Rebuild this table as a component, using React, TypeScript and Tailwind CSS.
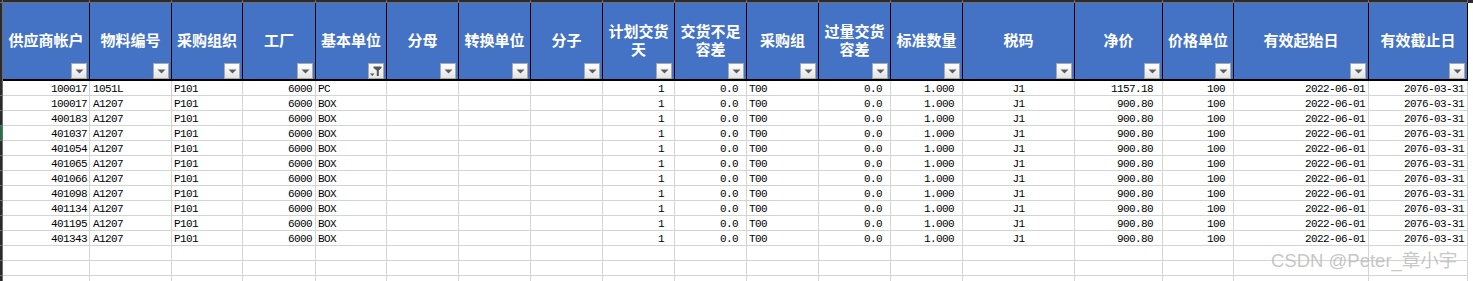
import React from 'react';

const GRID =
  'grid grid-cols-[3px_87px_82px_71px_73px_71px_72px_72px_72px_72px_72px_72px_72px_72px_112px_88px_71px_135px_99px]';

const headers = [
  '供应商帐户', '物料编号', '采购组织', '工厂', '基本单位', '分母', '转换单位', '分子',
  '计划交货天', '交货不足容差', '采购组', '过量交货容差', '标准数量', '税码', '净价',
  '价格单位', '有效起始日', '有效截止日',
];

// alignment + padding for each data column
const cellCls = [
  'justify-end pr-[2px]',
  'justify-start pl-[3px]',
  'justify-start pl-[2px]',
  'justify-end pr-[3px]',
  'justify-start pl-[2px]',
  'justify-end',
  'justify-end',
  'justify-end',
  'justify-end pr-[10px]',
  'justify-end pr-[8px]',
  'justify-start pl-[2px]',
  'justify-end pr-[8px]',
  'justify-end pr-[8px]',
  'justify-center',
  'justify-end pr-[9px]',
  'justify-end pr-[8px]',
  'justify-end pr-[3px]',
  'justify-end pr-[3px]',
];

const accounts = ['100017', '100017', '400183', '401037', '401054', '401065', '401066', '401098', '401134', '401195', '401343'];

const rows = accounts.map((acct, i) => [
  acct,
  i === 0 ? '1051L' : 'A1207',
  'P101',
  '6000',
  i === 0 ? 'PC' : 'BOX',
  '',
  '',
  '',
  '1',
  '0.0',
  'T00',
  '0.0',
  '1.000',
  'J1',
  i === 0 ? '1157.18' : '900.80',
  '100',
  '2022-06-01',
  '2076-03-31',
]);

const FilterButton: React.FC<{ active?: boolean }> = ({ active }) => (
  <div className="absolute right-[2px] bottom-0 w-[16px] h-[16px] border border-[#a9a9a9] bg-gradient-to-b from-white to-[#e4e4e4] flex items-center justify-center">
    {active ? (
      <svg width="14" height="14" viewBox="0 0 14 14">
        <polygon points="4.5,2.5 12.5,2.5 12.5,4 9.8,6.5 9.8,12 7.8,12 7.8,6.5 4.5,4" fill="#555" />
        <polygon points="1,9.5 5.5,9.5 3.25,12" fill="#555" />
      </svg>
    ) : (
      <svg width="9" height="5" viewBox="0 0 9 5">
        <polygon points="0.5,0.5 8.5,0.5 4.5,4.5" fill="#5f5f5f" />
      </svg>
    )}
  </div>
);

export default function App() {
  return (
    <div className="relative w-[1473px] h-[281px] overflow-hidden bg-white">
      {/* column letter strip (cut off) */}
      <div className={`${GRID} h-[3px] bg-[#2b2b2b]`}>
        {Array.from({ length: 19 }).map((_, i) => (
          <div key={i} className="border-r border-b border-[#6e6e6e]" />
        ))}
      </div>

      {/* header */}
      <div className={`${GRID} h-[78px]`}>
        <div className="bg-[#2b2b2b] border-r border-[#6e6e6e]" />
        {headers.map((h, i) => (
          <div
            key={h}
            className="relative bg-[#4472c4] border-r border-black border-b-2 flex items-center justify-center px-[4px] pb-[2px]"
          >
            <span className="text-white text-[15px] leading-[18px] font-bold text-center [font-family:'Noto_Sans_CJK_SC',sans-serif]">
              {h}
            </span>
            <FilterButton active={i === 4} />
          </div>
        ))}
      </div>

      {/* data rows */}
      {rows.map((r, ri) => (
        <div key={ri} className={`${GRID} h-[15px]`}>
          <div className={`border-r border-b ${ri === 3 ? 'bg-[#217346]' : 'bg-[#2b2b2b]'} border-[#6e6e6e]`} />
          {r.map((v, ci) => (
            <div
              key={ci}
              className={`flex items-center pt-[1px] border-r border-b border-[#d4d4d4] text-black text-[11px] leading-[14px] tracking-[-0.6px] whitespace-nowrap overflow-hidden [font-family:'Liberation_Mono',monospace] ${cellCls[ci]}`}
            >
              {v}
            </div>
          ))}
        </div>
      ))}

      {/* empty rows */}
      {[0, 1, 2].map((k) => (
        <div key={k} className={`${GRID} h-[15px]`}>
          <div className="bg-[#2b2b2b] border-r border-b border-[#6e6e6e]" />
          {headers.map((h) => (
            <div key={h} className="border-r border-b border-[#d4d4d4]" />
          ))}
        </div>
      ))}

      {/* watermark */}
      <div className="absolute left-[1271px] top-[251px] text-[18.5px] leading-[20px] text-[#b8b8b8]/80 whitespace-nowrap [font-family:'Liberation_Sans','Noto_Sans_CJK_SC',sans-serif]">
        CSDN @Peter_章小宇
      </div>
    </div>
  );
}
